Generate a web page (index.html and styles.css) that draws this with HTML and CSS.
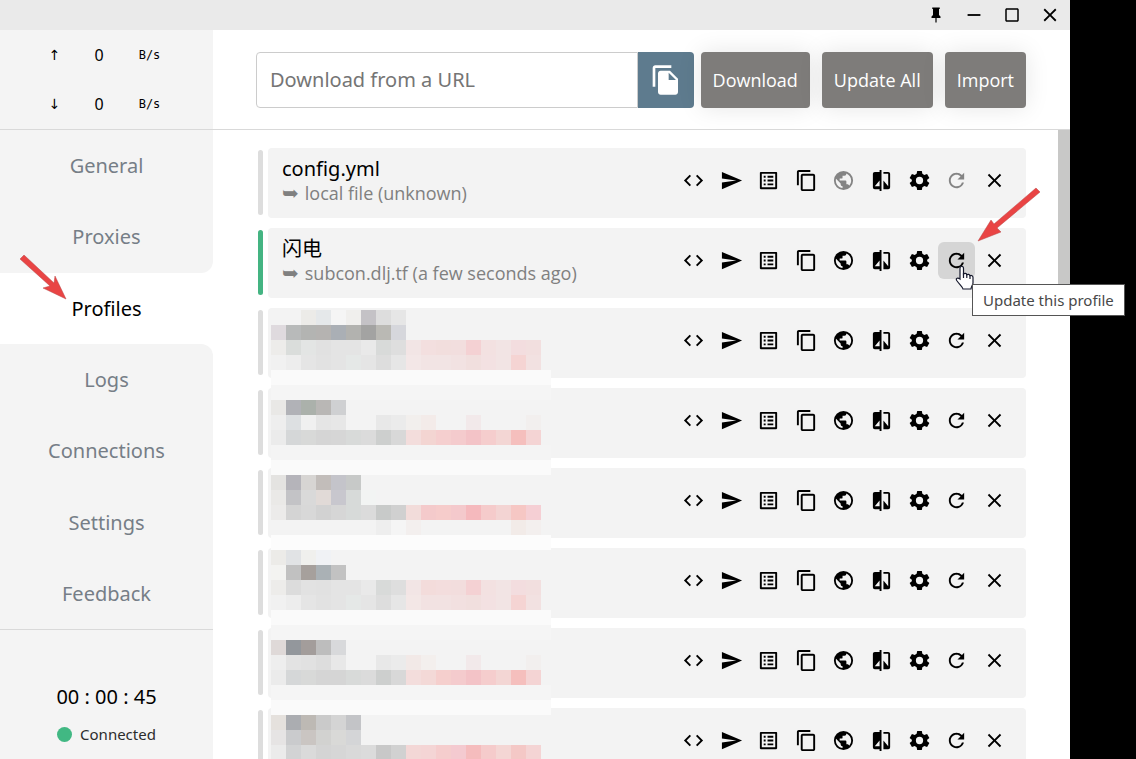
FILE: index.html
```html
<!DOCTYPE html>
<html lang="en">
<head>
<meta charset="utf-8">
<title>Profiles</title>
<link rel="stylesheet" href="styles.css">
</head>
<body>
<svg class="sprite" aria-hidden="true">
  <symbol id="pin" viewBox="0 0 24 24"><path d="M16 12V4h1V2H7v2h1v8l-2 2v2h5.200v6h1.600v-6H18v-2z"/></symbol>
  <symbol id="minus" viewBox="0 0 24 24"><path d="M5 11h14v2H5z"/></symbol>
  <symbol id="square" viewBox="0 0 24 24"><path d="M19 3H5c-1.100 0-2 .9-2 2v14c0 1.100.9 2 2 2h14c1.100 0 2-.9 2-2V5c0-1.100-.9-2-2-2zm0 16H5V5h14z"/></symbol>
  <symbol id="close" viewBox="0 0 24 24"><path d="M19 6.410 17.590 5 12 10.590 6.410 5 5 6.410 10.590 12 5 17.590 6.410 19 12 13.410 17.590 19 19 17.590 13.410 12z"/></symbol>
  <symbol id="paste" viewBox="0 0 24 24"><path d="M16 1H4c-1.100 0-2 .9-2 2v14h2V3h12zM15 5l6 6v10c0 1.100-.9 2-2 2H8c-1.100 0-2-.9-2-2V7c0-1.100.9-2 2-2zm-1 7h5.500L14 6.500z"/></symbol>
  <symbol id="code" viewBox="0 0 24 24"><path d="M9.400 16.600 4.800 12l4.600-4.600L8 6l-6 6 6 6zm5.200 0 4.600-4.600-4.600-4.600L16 6l6 6-6 6z"/></symbol>
  <symbol id="send" viewBox="0 0 24 24"><path d="M2 21l21-9L2 3v7l15 2-15 2z"/></symbol>
  <symbol id="list" viewBox="0 0 24 24"><path d="M11 7h6v2h-6zm0 4h6v2h-6zm0 4h6v2h-6zM7 7h2v2H7zm0 4h2v2H7zm0 4h2v2H7zM20.100 3H3.900c-.5 0-.9.4-.9.9v16.200c0 .4.4.9.9.9h16.200c.4 0 .9-.5.9-.9V3.900c0-.5-.5-.9-.9-.9zM19 19H5V5h14z"/></symbol>
  <symbol id="copy" viewBox="0 0 24 24"><path d="M16 1H4c-1.100 0-2 .9-2 2v14h2V3h12zm3 4H8c-1.100 0-2 .9-2 2v14c0 1.100.9 2 2 2h11c1.100 0 2-.9 2-2V7c0-1.100-.9-2-2-2zm0 16H8V7h11z"/></symbol>
  <symbol id="earth" viewBox="0 0 24 24"><path d="M17.900 17.390C17.640 16.590 16.890 16 16 16h-1v-3a1 1 0 0 0-1-1H8v-2h2a1 1 0 0 0 1-1V7h2a2 2 0 0 0 2-2v-.41C17.930 5.770 20 8.640 20 12c0 2.080-.8 3.970-2.100 5.390M11 19.930C7.050 19.440 4 16.080 4 12c0-.62.08-1.220.21-1.790L9 15v1a2 2 0 0 0 2 2M12 2a10 10 0 1 0 0 20 10 10 0 0 0 0-20z"/></symbol>
  <symbol id="compare" viewBox="0 0 24 24"><path d="M19 3h-5v2h5v13l-5-6v9h5a2 2 0 0 0 2-2V5a2 2 0 0 0-2-2M10 18H5l5-6M10 3H5a2 2 0 0 0-2 2v14a2 2 0 0 0 2 2h5v2h2V1h-2z"/></symbol>
  <symbol id="cog" viewBox="0 0 24 24"><path fill-rule="evenodd" d="M9.600 2h4.800l.6 3 2 1.150 2.900-1 2.400 4.150L20 11.300v1.400l2.300 2-2.400 4.150-2.900-1L15 19l-.6 3H9.600L9 19l-2-1.150-2.900 1L1.700 14.700l2.300-2v-1.400l-2.300-2L4.100 5.150l2.900 1L9 5zM12 8.200a3.800 3.800 0 1 0 0 7.600 3.800 3.800 0 0 0 0-7.600z"/></symbol>
  <symbol id="refresh" viewBox="0 0 24 24"><path d="M17.650 6.350A7.960 7.960 0 0 0 12 4c-4.420 0-7.990 3.580-7.990 8s3.570 8 7.990 8c3.730 0 6.840-2.550 7.730-6h-2.080A5.990 5.990 0 0 1 12 18c-3.310 0-6-2.690-6-6s2.690-6 6-6c1.660 0 3.140.69 4.220 1.780L13 11h7V4z"/></symbol>
</svg>

<div class="window">
  <div class="titlebar">
    <button aria-label="Pin"><svg class="icon-small"><use href="#pin"/></svg></button>
    <button aria-label="Minimize"><svg><use href="#minus"/></svg></button>
    <button aria-label="Maximize"><svg class="icon-small"><use href="#square"/></svg></button>
    <button aria-label="Close"><svg><use href="#close"/></svg></button>
  </div>
  <aside class="sidebar">
    <div class="traffic">
      <div class="speed"><span class="dir">↑</span><span>0</span><span class="unit">B/s</span></div>
      <div class="speed"><span class="dir">↓</span><span>0</span><span class="unit">B/s</span></div>
    </div>
    <nav class="nav">
      <a href="#">General</a>
      <a href="#" class="before">Proxies</a>
      <a href="#" class="active">Profiles</a>
      <a href="#" class="after">Logs</a>
      <a href="#">Connections</a>
      <a href="#">Settings</a>
      <a href="#">Feedback</a>
    </nav>
    <div class="status">
      <div class="timer">00 : 00 : 45</div>
      <div class="connection"><span class="dot"></span>Connected</div>
    </div>
  </aside>
  <main class="main">
    <form class="toolbar">
      <div class="url">
        <input type="text" placeholder="Download from a URL" aria-label="Download from a URL">
        <button type="button" class="paste" aria-label="Paste"><svg><use href="#paste"/></svg></button>
      </div>
      <button type="button" class="action">Download</button>
      <button type="button" class="action">Update All</button>
      <button type="button" class="action">Import</button>
    </form>
    <div class="content">
      <div class="profiles" id="profiles"></div>
      <svg class="mosaic" id="mosaic" width="280" height="450" shape-rendering="crispEdges" aria-hidden="true"></svg>
      <div class="scrollbar"></div>
    </div>
  </main>
</div>

<svg class="pointer-arrow arrow-left" width="50" height="48" viewBox="0 0 50 48" aria-hidden="true"><path d="M4 1 34 29 35 22 46 45 23 34 30 32 0 5z"/></svg>
<svg class="pointer-arrow arrow-right" width="64" height="56" viewBox="0 0 64 56" aria-hidden="true"><path d="M59 1 17 37 14 33 1 54 24 45 20 41 63 5z"/></svg>
<svg class="hand" width="20" height="26" viewBox="0 0 20 26" aria-hidden="true"><path d="M5 14V3.500C5 .5 8.500.5 8.500 3.500V9c1-1 3-.7 3.300.7 1-.8 2.900-.4 3.200 1 1.500-.7 3 .2 3 1.800V18c0 2-1.800 3.200-2 6H8c-.3-2-3-4-6.300-8.500C.3 13 3 12.500 5 14z"/><path d="M8.500 8v5m3.300-4v4m3.200-3v4" fill="none"/></svg>
<div class="tooltip" role="tooltip">Update this profile</div>
<script src="script.js"></script>
</body>
</html>
```
FILE: styles.css
```css
* { box-sizing: border-box; }
body {
  margin: 0;
  height: 100vh;
  overflow: hidden;
  background: #000;
  font-family: "Noto Sans", "Noto Sans CJK SC", sans-serif;
  font-size: 20px;
  color: #000;
}
button, input { font: inherit; }
button { border: 0; padding: 0; background: none; color: inherit; }
svg { fill: currentColor; }
.sprite { position: absolute; width: 0; height: 0; }

.window {
  height: 100%;
  margin-right: 66px;
  display: grid;
  grid-template: 30px minmax(0, 1fr) / 213px minmax(0, 1fr);
  background: #fff;
}
.titlebar {
  grid-column: 1 / -1;
  display: flex;
  justify-content: flex-end;
  padding-right: 1px;
  background: #eaeaea;
}
.titlebar button { width: 38px; display: grid; place-items: center; }
.titlebar svg { width: 22px; height: 22px; }
.titlebar .icon-small { width: 18px; height: 18px; }

.sidebar { display: grid; grid-template-rows: 100px 1fr 129px; min-height: 0; }
.traffic {
  background: #f4f4f4;
  border-bottom: 1px solid #d9d9d9;
  display: grid;
  grid-template-rows: 1fr 1fr;
}
.speed {
  display: grid;
  grid-template-columns: 34px 55px 46px;
  justify-content: center;
  align-items: center;
  justify-items: center;
  padding-right: 3px;
  font-size: 16px;
}
.dir { font-family: "DejaVu Sans", sans-serif; font-size: 14px; }
.unit { font-family: "DejaVu Sans Mono", monospace; font-size: 12px; }
.nav { display: flex; flex-direction: column; border-bottom: 1px solid #d9d9d9; }
.nav a {
  flex: 1;
  display: grid;
  place-items: center;
  background: #f4f4f4;
  color: #767e87;
  text-decoration: none;
}
.nav .active { background: #fff; color: #000; }
.nav .before { border-bottom-right-radius: 12px; }
.nav .after { border-top-right-radius: 12px; }
.status {
  background: #f4f4f4;
  display: flex;
  flex-direction: column;
  align-items: center;
  justify-content: flex-end;
  gap: 12px;
  padding-bottom: 14px;
}
.timer { line-height: 28px; }
.connection { display: flex; align-items: center; gap: 8px; font-size: 15px; line-height: 22px; color: #2c2c2c; }
.dot { width: 15px; height: 15px; border-radius: 50%; background: #41b883; }

.main { display: grid; grid-template-rows: 100px minmax(0, 1fr); min-width: 0; }
.toolbar {
  display: flex;
  align-items: center;
  gap: 12px;
  padding: 0 44px 0 43px;
  border-bottom: 1px solid #d9d9d9;
}
.url { flex: 1; display: flex; min-width: 0; height: 56px; margin-right: -5px; }
.url input {
  flex: 1;
  min-width: 0;
  padding: 0 13px;
  border: 1px solid #ccc;
  border-radius: 4px 0 0 4px;
  background: #fff;
}
.url input::placeholder { color: #757575; opacity: 1; }
.paste {
  width: 56px;
  display: grid;
  place-items: center;
  background: #5e7b8e;
  color: #fff;
  border-radius: 0 4px 4px 0;
}
.paste svg { width: 32px; height: 32px; }
.action {
  height: 56px;
  padding: 0 12px;
  border-radius: 4px;
  background: #7e7c7a;
  color: #fff;
  font-family: "Open Sans", sans-serif;
  font-size: 18px;
  white-space: nowrap;
  box-shadow: 0 0 24px rgba(0, 0, 0, .1);
}

.content { position: relative; overflow: hidden; }
.profiles { display: grid; gap: 10px; padding: 18px 44px 0 45px; }
.profile { display: flex; align-items: center; gap: 5px; }
.profile::before { content: ""; width: 5px; height: 65px; margin-bottom: 2px; border-radius: 3px; background: #ddd; }
.profile.current::before { background: #44b482; }
.card {
  flex: 1;
  height: 70px;
  display: flex;
  align-items: center;
  justify-content: space-between;
  padding: 0 13px 6px 14px;
  border-radius: 4px;
  background: #f3f3f3;
}
.name { line-height: 26px; }
.source {
  display: flex;
  gap: 6px;
  font-family: "Open Sans", sans-serif;
  font-size: 18px;
  line-height: 22px;
  color: #808080;
}
.source span { font-family: "DejaVu Sans", sans-serif; font-size: 20px; }
.actions { display: grid; grid-template-columns: repeat(9, 1fr); width: 338px; }
.actions button { height: 37px; display: grid; place-items: center; border-radius: 6px; }
.actions button:disabled { color: #848484; }
.actions .hover { background: #d5d5d5; }
.actions svg { width: 23px; height: 23px; }
.mosaic { position: absolute; left: 58px; top: 180px; }
.scrollbar { position: absolute; right: 0; top: 0; width: 12px; height: 172px; background: #c8c8c7; }

.pointer-arrow { position: absolute; fill: #e94444; stroke: #b84848; stroke-width: 0.500; }
.arrow-left { left: 20px; top: 254px; }
.arrow-right { left: 977px; top: 187px; }
.hand { position: absolute; left: 955px; top: 265px; fill: #fff; stroke: #15182c; stroke-width: 1.200; }
.tooltip {
  position: absolute;
  left: 972px;
  top: 284px;
  padding: 4px 10px;
  border: 1px solid #555;
  background: #fff;
  color: #484848;
  font-size: 15px;
  line-height: 22px;
  white-space: nowrap;
}
```
FILE: script.js
```js
const icons = [
  ["code", "Edit as text"], ["send", "Open"], ["list", "Edit rules"],
  ["copy", "Duplicate"], ["earth", "Website"], ["compare", "Diff"],
  ["cog", "Settings"], ["refresh", "Update this profile"], ["close", "Delete"]
];
const profiles = [
  { name: "config.yml", source: "local file (unknown)", local: true },
  { name: "闪电", source: "subcon.dlj.tf (a few seconds ago)", current: true },
  {}, {}, {}, {}, {}, {}
];

document.getElementById("profiles").innerHTML = profiles.map(p => {
  const text = p.name
    ? `<div class="name">${p.name}</div><div class="source"><span>➥</span>${p.source}</div>` : "";
  const buttons = icons.map(([id, label]) => {
    const off = p.local && (id === "earth" || id === "refresh") ? " disabled" : "";
    const hover = p.current && id === "refresh" ? ' class="hover"' : "";
    return `<button aria-label="${label}"${hover}${off}><svg><use href="#${id}"/></svg></button>`;
  }).join("");
  return `<div class="profile${p.current ? " current" : ""}"><div class="card"><div>${text}</div><div class="actions">${buttons}</div></div></div>`;
}).join("");

/* Censor blocks: one string per 15px row; "*" fills the whole strip, "-" is plain card colour. */
const rows = [
  "- - ecebe8 e5e8ea f5f5f5 f0efed c4c2c6 dddddd e6e6e6",
  "dfdade b8baba b3b4b2 b5b3b1 aaafb5 b2b2af a3a3a2 bab9b4 d6d7dc",
  "edecea dadddb e3e5e4 e1e1e1 e4e4e4 e4e4e4 e9e9e9 d8dad9 dedede f2e5e5 f3dfdf f2dedd f2dede f4d1d3 f3e1e1 f2e4e4 f3dddf f2dfdf",
  "f1f1f1 ededed e5e5e5 e2e2e2 e4e4e4 e5e8e7 e5e5e5 dddddd e6e6e6 f3e7e7 f2e4e4 f2e4e4 f2e2e2 f1dfde f3e1e2 f2e4e4 f5d4d3 f2e1e1",
  "*fafafa", "*f5f5f5",
  "e9e8e6 b1b2b7 abb1ab b9b7b5 cfd0d2",
  "eeeeee dde0e2 f0f0f0 e5e5e5 e7e7e7 - - e8e8e8 ebebeb f2efed f3ebe9 - - f2e9ea - - - f2efee",
  "ebebeb d5d7d8 d8d9d8 d5d5d5 d6d6d6 d8dad9 dbdbdb cdcfce d8d8d8 f3dddc f3d5d2 f5cfcf f4cbcd f3c3c7 f5cdcd f3d6d4 f5bfbd f4d4d4",
  "*f4f4f4", "*fafafa",
  "e4e3e1 b5b4ba d7d5d3 c2bdba c4c4ca c7c9c8",
  "eae9e7 c3c3c6 d9d9d9 e1dad7 c8c7ce d7dad9 f2f4f3",
  "ecebea d4d4d4 d8d8d8 d2d2d2 d6d6d6 d7dad9 dbdbdb c8cac9 d0d0d0 f2dcda f4cacb f6cccb f4c9cc f5b9bd f5cbcb f3d4d3 f6c7c4 f5cfd4",
  "- - - - - - - eeeeee f5f5f5 f3efee - - - - - - f2ebe8 f3efee",
  "*fcfcfc",
  "ecebe8 e1e3e5 f0f0ed f0f2f5",
  "f3f3f1 c1c1c1 a6a09c aab1b5 c2c2c2",
  "edecea dcdcdc e2e2e2 e1e1e1 e4e4e4 e4e4e4 e9e9e9 d8dad9 dedede f2e5e5 f3dcdb f3dddd f2dddd f4d1d3 f3e1e1 f2e4e4 f3dddf f2dfdf",
  "f1f1f1 ededed e5e5e5 e2e2e2 e4e4e4 e5e8e7 e5e5e5 dddddd e6e6e6 f3e7e6 f2e2e2 f2e2e2 f2e0e0 f1dfde f3e1e2 f2e4e4 f5d4d3 f2e1e1",
  "*fafafa", "*f5f5f5",
  "dfd9d8 93979c a39d9b bdbdbd d8d9db",
  "eeeeee e3e3e3 e1e1e1 dddddd e8e8e8 - - e8e8e8 ebebeb f2e9e7 f3efed - - f2e9ea - - - f2efee",
  "ebebeb d5d7d8 d8d9d8 d5d5d5 d5d5d5 d8dad9 dbdbdb cdcfce d8d8d8 f3dddc f3d9d7 f5cfcd f4cbcd f3c3c7 f5cdcd f3d6d4 f5bfbd f4d4d4",
  "*f5f5f5", "*fafafa",
  "e5e1dd abadb1 bdb9b4 cacaca d4d4d4 c3c4c7",
  "e6e4e4 cacbcd cac5c2 d2d2d0 d9d9d7 d4d5d7",
  "ebebeb d2d3d4 dadada d4d4d4 d6d6d6 d9d9d9 dbdbdb c8c8c8 d1d1d1 f3d7d6 f4d5d5 f5cdcd f4cad0 f5bcbd f5cbcb f4d6d4 f4c8c6 f4d4d4"
];
document.getElementById("mosaic").innerHTML = rows.map((row, y) => {
  const rect = (x, w, c) => `<rect x="${x}" y="${y * 15}" width="${w}" height="15" fill="#${c}"/>`;
  if (row[0] === "*") return rect(0, 280, row.slice(1));
  return rect(0, 280, "f3f3f3") + row.split(" ").map((c, x) => c === "-" ? "" : rect(x * 15, 15, c)).join("");
}).join("");
```
